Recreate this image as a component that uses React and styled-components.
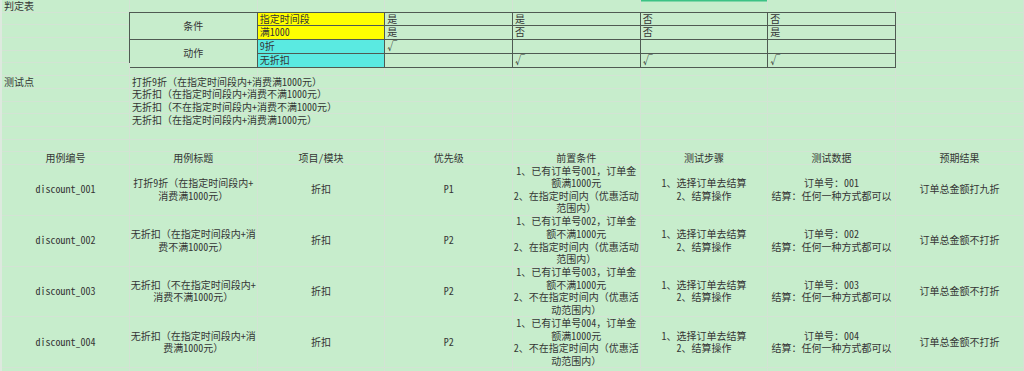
import React from 'react';
import styled, { createGlobalStyle, css } from 'styled-components';

const BG = '#c7edcc';
const GRID = '#d3e3d4';
const DARK = '#4f5a52';
const INK = '#353535';

const Global = createGlobalStyle`
  html, body { margin: 0; padding: 0; background: ${BG}; overflow: hidden; }
  body { width: 1024px; height: 371px; }
`;

const Sheet = styled.div`
  box-sizing: border-box;
  width: 1024px;
  height: 371px;
  overflow: hidden;
  display: grid;
  grid-template-columns: 128px repeat(6, 127.67px) 1fr;
  grid-template-rows: repeat(13, 12.7px) repeat(5, 50.8px);
  border-left: 2px solid #dde9de;
  background: ${BG};
  font-family: "Noto Sans Mono CJK SC", "Noto Sans CJK SC", sans-serif;
  font-size: 10px;
  line-height: 12.7px;
  color: ${INK};
`;

const Cell = styled.div`
  box-sizing: border-box;
  min-width: 0;
  grid-column: span ${(p) => p.$span || 1};
  display: flex;
  align-items: center;
  justify-content: ${(p) => (p.$center ? 'center' : 'flex-start')};
  text-align: ${(p) => (p.$center ? 'center' : 'left')};
  padding: ${(p) => (p.$top ? '1px 2px 0' : '0 2px')};
  white-space: nowrap;
  border-right: 1px solid ${GRID};
  border-bottom: 1px solid ${GRID};
  ${(p) =>
    p.$selTop &&
    css`
      box-shadow: inset 0 1.5px 0 #3cc285;
    `}
`;

const Stack = styled.div`
  display: flex;
  flex-direction: column;
  align-items: center;
`;

const Line = styled.div`
  height: 12.6px;
  line-height: 12.6px;
  white-space: nowrap;
`;

const Decision = styled.div`
  grid-column: span 6;
  grid-row: span 4;
  margin: -1px 0 0 -1px;
  display: grid;
  grid-template-columns: repeat(6, 1fr);
  grid-template-rows: repeat(4, 1fr);
  border-top: 1px solid ${DARK};
  border-left: 1px solid ${DARK};
  position: relative;
  z-index: 1;
`;

const TCell = styled.div`
  box-sizing: border-box;
  min-width: 0;
  grid-row: span ${(p) => p.$rows || 1};
  display: flex;
  align-items: center;
  justify-content: ${(p) => (p.$center ? 'center' : 'flex-start')};
  padding: 0 2px;
  white-space: nowrap;
  background: ${(p) => p.$fill || 'transparent'};
  border-right: 1px solid ${DARK};
  border-bottom: 1px solid ${DARK};
`;

const YELLOW = '#ffff00';
const CYAN = '#5aeae1';

const decisionRows = [
  { group: '条件', label: '指定时间段', fill: YELLOW, vals: ['是', '是', '否', '否'] },
  { label: '满1000', fill: YELLOW, vals: ['是', '否', '否', '是'] },
  { group: '动作', label: '9折', fill: CYAN, vals: ['√', '', '', ''] },
  { label: '无折扣', fill: CYAN, vals: ['', '√', '√', '√'] },
];

const points = [
  '打折9折（在指定时间段内+消费满1000元）',
  '无折扣（在指定时间段内+消费不满1000元）',
  '无折扣（不在指定时间段内+消费不满1000元）',
  '无折扣（在指定时间段内+消费满1000元）',
];

const headers = ['用例编号', '用例标题', '项目/模块', '优先级', '前置条件', '测试步骤', '测试数据', '预期结果'];

const cases = [
  {
    id: 'discount_001',
    title: ['打折9折（在指定时间段内+', '消费满1000元）'],
    pri: 'P1',
    pre: ['1、已有订单号001，订单金', '额满1000元', '2、在指定时间内（优惠活动', '范围内）'],
    no: '001',
    exp: '订单总金额打九折',
  },
  {
    id: 'discount_002',
    title: ['无折扣（在指定时间段内+消', '费不满1000元）'],
    pri: 'P2',
    pre: ['1、已有订单号002，订单金', '额不满1000元', '2、在指定时间内（优惠活动', '范围内）'],
    no: '002',
    exp: '订单总金额不打折',
  },
  {
    id: 'discount_003',
    title: ['无折扣（不在指定时间段内+', '消费不满1000元）'],
    pri: 'P2',
    pre: ['1、已有订单号003，订单金', '额不满1000元', '2、不在指定时间内（优惠活', '动范围内）'],
    no: '003',
    exp: '订单总金额不打折',
  },
  {
    id: 'discount_004',
    title: ['无折扣（在指定时间段内+消', '费满1000元）'],
    pri: 'P2',
    pre: ['1、已有订单号004，订单金', '额满1000元', '2、不在指定时间内（优惠活', '动范围内）'],
    no: '004',
    exp: '订单总金额不打折',
  },
];

const Empty = ({ n, prefix }) =>
  Array.from({ length: n }, (_, i) => <Cell key={`${prefix}-${i}`} />);

const Lines = ({ lines }) => (
  <Stack>
    {lines.map((l, i) => (
      <Line key={i}>{l}</Line>
    ))}
  </Stack>
);

export default function App() {
  return (
    <>
      <Global />
      <Sheet>
        {/* row 0 */}
        <Cell $top>判定表</Cell>
        <Empty n={4} prefix="r0a" />
        <Cell $selTop />
        <Empty n={2} prefix="r0b" />

        {/* rows 1-4: decision table */}
        <Cell />
        <Decision>
          {decisionRows.map((r, i) => (
            <React.Fragment key={i}>
              {r.group && (
                <TCell $rows={2} $center>
                  {r.group}
                </TCell>
              )}
              <TCell $fill={r.fill}>{r.label}</TCell>
              {r.vals.map((v, j) => (
                <TCell key={j}>{v}</TCell>
              ))}
            </React.Fragment>
          ))}
        </Decision>
        <Cell />
        {[2, 3, 4].map((r) => (
          <React.Fragment key={r}>
            <Cell />
            <Cell />
          </React.Fragment>
        ))}

        {/* row 5 */}
        <Empty n={8} prefix="r5" />

        {/* rows 6-9: test points */}
        {points.map((p, i) => (
          <React.Fragment key={i}>
            <Cell>{i === 0 ? '测试点' : ''}</Cell>
            <Cell $span={3}>{p}</Cell>
            <Empty n={4} prefix={`tp${i}`} />
          </React.Fragment>
        ))}

        {/* rows 10-11 */}
        <Empty n={16} prefix="r10" />

        {/* row 12: headers */}
        {headers.map((h) => (
          <Cell key={h} $center>
            {h}
          </Cell>
        ))}

        {/* case rows */}
        {cases.map((c) => (
          <React.Fragment key={c.id}>
            <Cell $center>{c.id}</Cell>
            <Cell $center>
              <Lines lines={c.title} />
            </Cell>
            <Cell $center>折扣</Cell>
            <Cell $center>{c.pri}</Cell>
            <Cell $center>
              <Lines lines={c.pre} />
            </Cell>
            <Cell $center>
              <Lines lines={['1、选择订单去结算', '2、结算操作']} />
            </Cell>
            <Cell $center>
              <Lines lines={[`订单号：${c.no}`, '结算：任何一种方式都可以']} />
            </Cell>
            <Cell $center>{c.exp}</Cell>
          </React.Fragment>
        ))}

        {/* trailing row */}
        <Empty n={8} prefix="r17" />
      </Sheet>
    </>
  );
}
